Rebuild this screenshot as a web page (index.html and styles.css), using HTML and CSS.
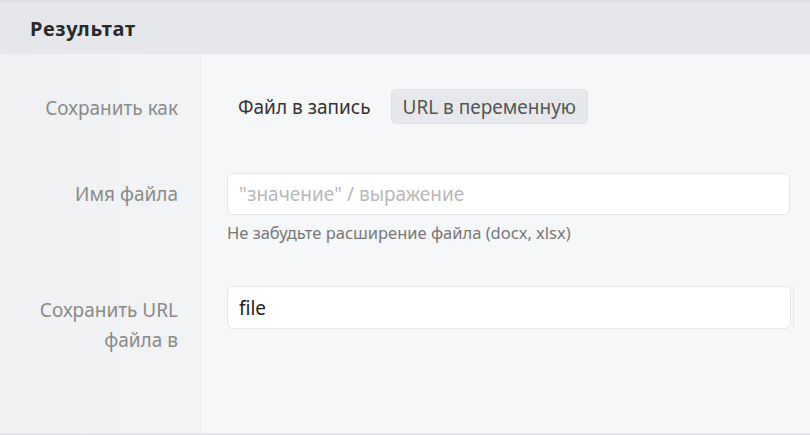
FILE: index.html
```html
<!DOCTYPE html>
<html lang="ru">
<head>
<meta charset="utf-8">
<link rel="stylesheet" href="styles.css">
</head>
<body>
<div class="panel">
  <div class="panel-header">Результат</div>
  <div class="panel-body">
    <div class="row row-save">
      <div class="label">Сохранить как</div>
      <div class="field">
        <div class="segmented">
          <button class="seg">Файл в запись</button>
          <button class="seg seg-active">URL в переменную</button>
        </div>
      </div>
    </div>
    <div class="row row-name">
      <div class="label">Имя файла</div>
      <div class="field">
        <div class="input placeholder">"значение" / выражение</div>
        <div class="hint">Не забудьте расширение файла (docx, xlsx)</div>
      </div>
    </div>
    <div class="row row-url">
      <div class="label label-multi">Сохранить URL<br>файла в</div>
      <div class="field field-edge">
        <div class="input-wrap">
          <div class="input">file</div>
        </div>
      </div>
    </div>
  </div>
</div>
</body>
</html>
```
FILE: styles.css
```css
* { box-sizing: border-box; }
html, body { margin: 0; padding: 0; }
body {
  width: 810px;
  height: 435px;
  overflow: hidden;
  font-family: "Noto Sans", "Open Sans", sans-serif;
  background: #f6f7f9;
}
.panel {
  height: 435px;
  display: flex;
  flex-direction: column;
  border-top: 2px solid #dfe0e4;
  border-bottom: 2px solid #e4e5e8;
}
.panel-header {
  height: 52px;
  flex: none;
  background: #e6e7eb;
  padding-left: 30px;
  display: flex;
  align-items: center;
  font-size: 20px;
  letter-spacing: 0.7px;
  font-weight: 700;
  color: #2a2a2a;
}
.panel-body {
  flex: 1;
  display: flex;
  flex-direction: column;
  background: linear-gradient(to right, #f0f1f3 0, #f2f3f5 202px, #f6f7f9 202px);
}
.row {
  display: flex;
}
.label {
  width: 202px;
  flex: none;
  padding-right: 24px;
  text-align: right;
  font-size: 19px;
  color: #8a8a8a;
  line-height: 26px;
  white-space: nowrap;
}
.field {
  flex: 1;
  padding-left: 25px;
  padding-right: 20px;
}
.row-save { padding-top: 35px; }
.row-save .label { padding-top: 6px; }
.segmented { display: flex; gap: 9px; }
.seg {
  font: inherit;
  font-size: 19px;
  height: 35px;
  padding: 0 10px;
  border: 1px solid transparent;
  border-radius: 5px;
  background: transparent;
  color: #333;
  white-space: nowrap;
}
.seg-active {
  background: #e7e8ec;
  border-color: #dfe0e4;
  color: #555;
  padding: 0 11px;
  width: 197px;
}
.row-name { padding-top: 49px; }
.row-name .label { padding-top: 8px; }
.input {
  height: 42px;
  background: #fff;
  border: 1px solid #e6e7ea;
  border-radius: 6px;
  padding: 0 11px;
  display: flex;
  align-items: center;
  font-size: 19px;
  color: #222;
}
.placeholder { color: #b8b8b8; }
.hint {
  margin-top: 8px;
  font-size: 16.5px;
  line-height: 20px;
  color: #777;
  white-space: nowrap;
}
.row-url { padding-top: 43px; }
.row-url .input { height: 43px; }
.label-multi { padding-top: 9px; line-height: 30px; }
.field-edge { padding-right: 16px; }
.input-wrap {
  padding-right: 2px;
  border-right: 1px solid #e6e7ea;
}
```
